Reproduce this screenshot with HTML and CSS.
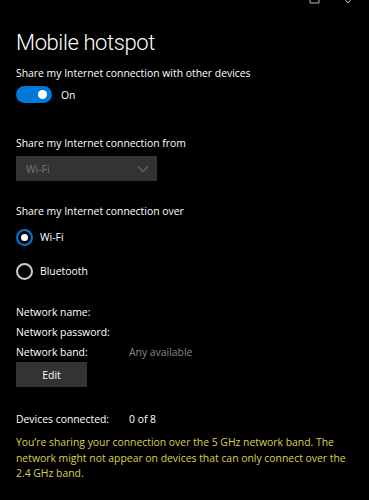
FILE: index.html
```html
<!DOCTYPE html>
<html lang="en">

<head>
    <meta charset="UTF-8">
    <title>Mobile hotspot</title>
    <link rel="stylesheet" href="styles.css">
</head>

<body>

    <!-- window buttons (cut off at top) -->
    <svg class="winbtns" width="60" height="6" viewBox="0 0 60 6">
        <path d="M4 -4 V3 H13 V-4" fill="none" stroke="#bbbbbb" stroke-width="1" />
        <path d="M37 -3 L42 3 M47 -3 L42 3" fill="none" stroke="#bbbbbb" stroke-width="1" />
    </svg>

    <div class="page">
        <h1>Mobile hotspot</h1>

        <p class="label">Share my Internet connection with other devices</p>
        <div class="toggle-row">
            <span class="toggle"><span class="knob"></span></span>
            <span>On</span>
        </div>

        <p class="label from">Share my Internet connection from</p>
        <div class="select">
            <span>Wi-Fi</span>
            <svg width="12" height="8" viewBox="0 0 12 8">
                <path d="M1 1.5 L6 6.5 L11 1.5" fill="none" stroke="#6a6a6a" stroke-width="1.2" />
            </svg>
        </div>

        <p class="label over">Share my Internet connection over</p>
        <div class="radio checked"><span class="dot"></span>Wi-Fi</div>
        <div class="radio"><span class="dot"></span>Bluetooth</div>

        <div class="info">
            <div class="row"><span class="key">Network name:</span></div>
            <div class="row"><span class="key">Network password:</span></div>
            <div class="row"><span class="key">Network band:</span><span class="val">Any available</span></div>
        </div>
        <button class="edit">Edit</button>

        <div class="row devices"><span class="key">Devices connected:</span><span>0 of 8</span></div>

        <p class="warn">You’re sharing your connection over the 5 GHz network band. The network might not appear on devices that can only connect over the 2.4 GHz band.</p>
    </div>

</body>

</html>
```

FILE: styles.css
```css
body {
    margin: 0;
    background: #000000;
    color: #ffffff;
    font-family: "Open Sans", "Noto Sans", sans-serif;
    font-size: 10.4px;
    width: 369px;
    height: 500px;
    overflow: hidden;
    position: relative;
}

.winbtns {
    position: absolute;
    top: 0;
    right: 3px;
}

.page {
    padding: 0 16px;
}

h1 {
    margin: 0;
    padding-top: 27px;
    font-family: "Roboto", "Open Sans", sans-serif;
    font-weight: 300;
    font-size: 22px;
    letter-spacing: -0.4px;
    line-height: 32px;
}

.label {
    margin: 0;
    line-height: 16px;
}

h1 + .label {
    margin-top: 6px;
}

.toggle-row {
    display: flex;
    align-items: center;
    gap: 9px;
    margin-top: 5px;
}

.toggle {
    width: 36px;
    height: 17px;
    border-radius: 9px;
    background: #0078d7;
    position: relative;
}

.knob {
    position: absolute;
    right: 5px;
    top: 4px;
    width: 9px;
    height: 9px;
    border-radius: 50%;
    background: #ffffff;
}

.from {
    margin-top: 32px;
}

.select {
    margin-top: 5px;
    width: 141px;
    height: 25px;
    background: #333333;
    color: #777777;
    display: flex;
    align-items: center;
    justify-content: space-between;
    padding: 0 8px 0 10px;
    box-sizing: border-box;
}

.over {
    margin-top: 22px;
}

.radio {
    display: flex;
    align-items: center;
    gap: 7px;
    height: 20px;
    margin-top: 8px;
}

.radio + .radio {
    margin-top: 14px;
}

.dot {
    width: 17px;
    height: 17px;
    box-sizing: border-box;
    border: 2px solid #cccccc;
    border-radius: 50%;
    position: relative;
}

.radio.checked .dot {
    border-color: #0078d7;
}

.radio.checked .dot::after {
    content: "";
    position: absolute;
    left: 3px;
    top: 3px;
    width: 7px;
    height: 7px;
    border-radius: 50%;
    background: #ffffff;
}

.info {
    margin-top: 21px;
}

.row {
    display: flex;
    line-height: 20px;
}

.key {
    width: 113px;
}

.val {
    color: #888888;
}

.edit {
    margin-top: 0;
    width: 71px;
    height: 25px;
    border: none;
    background: #333333;
    color: #ffffff;
    font-family: inherit;
    font-size: 10.4px;
}

.devices {
    margin-top: 22px;
}

.warn {
    margin: 6px 0 0;
    color: #d9d24a;
    line-height: 15.5px;
    width: 340px;
}
```
